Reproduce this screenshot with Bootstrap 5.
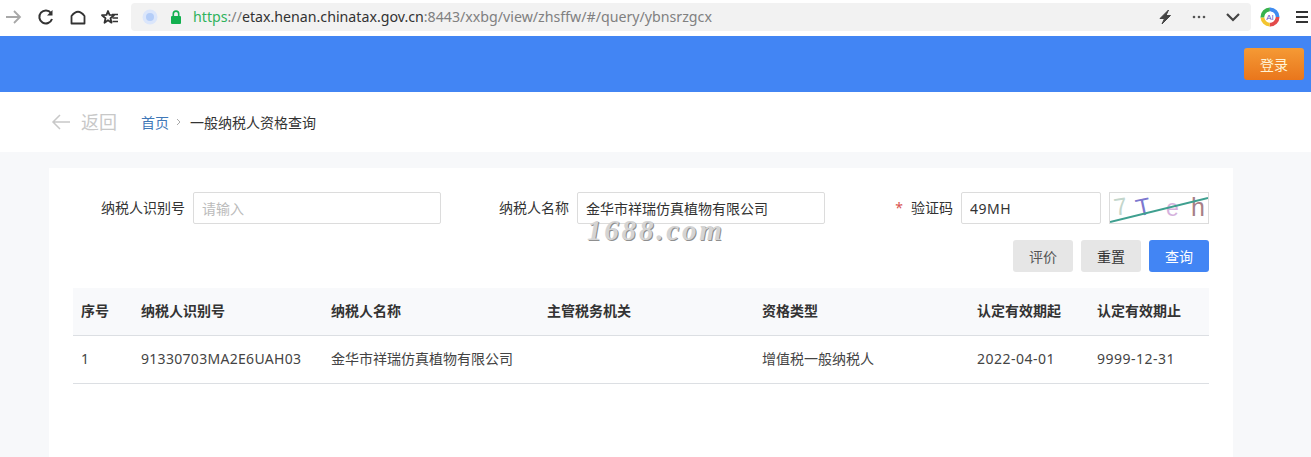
<!DOCTYPE html>
<html lang="zh-CN">
<head>
<meta charset="utf-8">
<title>一般纳税人资格查询</title>
<link rel="stylesheet" href="https://cdn.jsdelivr.net/npm/bootstrap@5.3.0/dist/css/bootstrap.min.css">
<style>
html,body{height:457px;overflow:hidden}
body{background:#f7f8fa;color:#333;font:14px/20px "Noto Sans","Noto Sans CJK SC",sans-serif}
.chrome-bar{height:36px;background:#fff;padding-bottom:2px}
.nav-ico{width:20px;height:20px;flex:none}
.nav-slots{width:131px;padding-left:4px;gap:12px}
.addr{width:1120px;height:28px;background:#f2f2f2;border-radius:4px;padding:0 10px 0 10px}
.lock-ico{margin-left:10px}
.addr-text{font-size:14.2px;color:#808080;white-space:nowrap;margin-left:10px}
.scheme{color:#2fb35d}
.host{color:#333}
.addr-tools{gap:18px}
.ext-tools{flex:1;padding:0 2px 0 9px}
.top-head{height:56px;background:#4285f4;padding-right:7px}
.login-btn{width:60px;height:32px;padding:0;border:0;border-radius:3px;font-size:14px;color:#fff3d6;background:linear-gradient(#f59a35,#e9761c)}
.login-btn:hover{color:#fff3d6;background:#e9761c}
.crumb-bar{height:60px;background:#fff;padding-left:51px}
.back-link{font-size:18px;color:#c8c8c8;width:90px}
.back-link svg{margin-right:11px}
.crumb-home{color:#3f78b8;text-decoration:none}
.crumb-sep{margin:0 9px 0 7px}
.crumb-line{padding-top:1px}
.panel{position:relative;margin:16px 78px 0 49px;background:#fff;padding:24px;height:300px}
.filter-grid{display:grid;grid-template-columns:repeat(3,368px);column-gap:16px}
.filter-label{width:120px;padding-right:8px;text-align:right;flex:none;margin:0}
.req{color:#d9534f;margin-right:8px}
.filter-input{height:32px;border:1px solid #dcdcdc;border-radius:2px;padding:0 8px;font-size:14px;color:#333;box-shadow:none;background:#fff}
.filter-input::placeholder{color:#bbb}
.code-input{width:140px;flex:none;letter-spacing:.5px}
.captcha{width:100px;height:32px;margin-left:8px;flex:none;border:1px solid #dcdcdc;display:block}
.act-row{gap:8px;margin-top:16px}
.act-btn{width:60px;height:32px;padding:0;border:0;border-radius:3px;font-size:14px;background:#e6e6e6;color:#333}
.act-btn.soft{color:#555}
.act-btn.go{background:#4285f4;color:#fff}
.result-table{table-layout:fixed;width:1136px;margin:16px 0 0;color:#333;border-color:#dcdfe3}
.result-table th{height:47px;background:#f8f9fb;font-weight:700;vertical-align:middle;padding:0 8px;border-bottom:1px solid #dcdfe3}
.result-table td{height:48px;vertical-align:middle;padding:0 8px;border-bottom:1px solid #dcdfe3;color:#444}
.result-table td.num{letter-spacing:.3px}
.result-table td.day{letter-spacing:.5px}
.result-table>thead{border-bottom:0}
.c-a{width:60px}.c-b{width:190px}.c-c{width:216px}.c-d{width:215px}.c-e{width:215px}.c-f{width:120px}.c-g{width:120px}
.stamp{position:absolute;left:538px;top:46px;font:italic 700 29px/32px "Liberation Serif",serif;letter-spacing:2.8px;color:#d4d4d4;text-shadow:1px 1px 0 #8f8f8f;pointer-events:none}
</style>
</head>
<body>
<div class="chrome-bar d-flex align-items-center">
  <div class="nav-slots d-flex align-items-center">
    <svg class="nav-ico" viewBox="0 0 20 20" fill="none" stroke="#a8a8a8" stroke-width="1.800"><path d="M2 10h14M10 4l6 6-6 6"/></svg>
    <svg class="nav-ico" viewBox="0 0 20 20" fill="none" stroke="#333" stroke-width="2"><path d="M15 6A6.500 6.500 0 1 0 16 12"/><path d="M16.500 3v5.500h-5.500z" fill="#333" stroke="none"/></svg>
    <svg class="nav-ico" viewBox="0 0 20 20" fill="none" stroke="#333" stroke-width="1.800" stroke-linejoin="round"><path d="M3.500 16.500V9Q10 .5 16.500 9v7.500z"/></svg>
    <svg class="nav-ico" viewBox="0 0 20 20" fill="none" stroke="#333" stroke-width="1.600"><path d="M8 4l1.500 3.800L14 8.200l-3.500 3 1 4.500L8 13.300 4.500 15.700l1-4.500L2 8.200l4.500-.4z" stroke-linejoin="round" stroke-width="1.800"/><path d="M12 7.500h6M12.500 11h5.500M12.500 14.500h5.500" stroke-width="1.500"/></svg>
  </div>
  <div class="addr d-flex align-items-center">
    <svg width="18" height="18" viewBox="0 0 18 18"><circle cx="9" cy="9" r="7.500" fill="#dbe6fb"/><circle cx="9" cy="9" r="4" fill="#b4cdf8"/></svg>
    <svg class="lock-ico" width="14" height="16" viewBox="0 0 14 16"><rect x="2" y="7" width="10" height="8" rx="1" fill="#12b04f"/><path d="M4.300 7V4.800a2.700 2.700 0 0 1 5.400 0V7" fill="none" stroke="#12b04f" stroke-width="1.600"/></svg>
    <span class="addr-text"><span class="scheme">https</span>://<span class="host">etax.henan.chinatax.gov.cn</span>:8443/xxbg/view/zhsffw/#/query/ybnsrzgcx</span>
    <div class="addr-tools ms-auto d-flex align-items-center">
      <svg width="16" height="18" viewBox="0 0 16 18"><path d="M11.500 2L3 10.500h4.500L5 16l8.500-8.500H9z" fill="#444" stroke="#444" stroke-width="1" stroke-linejoin="round"/></svg>
      <svg width="16" height="18" viewBox="0 0 16 18" fill="#555"><circle cx="3" cy="9" r="1.300"/><circle cx="8" cy="9" r="1.300"/><circle cx="13" cy="9" r="1.300"/></svg>
      <svg width="16" height="18" viewBox="0 0 16 18" fill="none" stroke="#444" stroke-width="2.200"><path d="M2 6l6 6 6-6"/></svg>
    </div>
  </div>
  <div class="ext-tools d-flex align-items-center justify-content-between">
    <svg width="20" height="20" viewBox="0 0 20 20" fill="none" stroke-width="4"><circle cx="10" cy="10" r="7.500" stroke="#e34b4b" stroke-dasharray="12 36"/><circle cx="10" cy="10" r="7.500" stroke="#f3c52f" stroke-dasharray="11 37" stroke-dashoffset="-12"/><circle cx="10" cy="10" r="7.500" stroke="#37b24d" stroke-dasharray="12 36" stroke-dashoffset="-23"/><circle cx="10" cy="10" r="7.500" stroke="#3f8cf0" stroke-dasharray="12 36" stroke-dashoffset="-35"/><circle cx="10" cy="10" r="5.500" fill="#fff" stroke="none"/><text x="10" y="13" text-anchor="middle" font-size="8" font-family="Liberation Sans" fill="#5a55c8" stroke="none">AI</text></svg>
    <svg width="14" height="14" viewBox="0 0 14 14" stroke="#333" stroke-width="2"><path d="M1 2h12M1 7h12M1 12h12"/></svg>
  </div>
</div>

<header class="top-head d-flex align-items-center justify-content-end">
  <button type="button" class="btn login-btn">登录</button>
</header>

<nav class="crumb-bar d-flex align-items-center" aria-label="breadcrumb">
  <span class="back-link d-flex align-items-center">
    <svg width="19" height="16" viewBox="0 0 19 16" fill="none" stroke="#c8c8c8" stroke-width="1.500"><path d="M19 8H2M9 1L2 8l7 7"/></svg>返回
  </span>
  <a class="crumb-home crumb-line" href="#">首页</a>
  <svg class="crumb-sep" width="5" height="8" viewBox="0 0 5 8" fill="none" stroke="#aaa"><path d="M1 1l3 3-3 3"/></svg>
  <span class="crumb-line">一般纳税人资格查询</span>
</nav>

<main class="panel">
  <form class="filter-grid">
    <div class="d-flex align-items-center">
      <label class="filter-label" for="f1">纳税人识别号</label>
      <input id="f1" class="form-control filter-input" placeholder="请输入">
    </div>
    <div class="d-flex align-items-center">
      <label class="filter-label" for="f2">纳税人名称</label>
      <input id="f2" class="form-control filter-input" value="金华市祥瑞仿真植物有限公司">
    </div>
    <div class="d-flex align-items-center">
      <label class="filter-label" for="f3"><span class="req">*</span>验证码</label>
      <input id="f3" class="form-control filter-input code-input" value="49MH">
      <svg class="captcha" viewBox="0 0 98 30" font-family="Liberation Sans">
        <text x="4" y="22" font-size="24" fill="#c3d6cc" transform="rotate(-9 10 14)">7</text>
        <text x="26" y="22" font-size="24" fill="#7d78cf" transform="rotate(-12 34 14)">T</text>
        <text x="56" y="23" font-size="23" fill="#d5b2dd">e</text>
        <text x="81" y="23" font-size="25" fill="#a77f88">h</text>
        <path d="M0 29L98 5" stroke="#3e9f8f" stroke-width="2"/>
      </svg>
    </div>
  </form>
  <div class="act-row d-flex justify-content-end">
    <button type="button" class="btn act-btn soft">评价</button>
    <button type="button" class="btn act-btn">重置</button>
    <button type="button" class="btn act-btn go">查询</button>
  </div>
  <table class="table result-table">
    <thead>
      <tr>
        <th class="c-a">序号</th><th class="c-b">纳税人识别号</th><th class="c-c">纳税人名称</th><th class="c-d">主管税务机关</th><th class="c-e">资格类型</th><th class="c-f">认定有效期起</th><th class="c-g">认定有效期止</th>
      </tr>
    </thead>
    <tbody>
      <tr>
        <td>1</td><td class="num">91330703MA2E6UAH03</td><td>金华市祥瑞仿真植物有限公司</td><td></td><td>增值税一般纳税人</td><td class="day">2022-04-01</td><td class="day">9999-12-31</td>
      </tr>
    </tbody>
  </table>
  <div class="stamp">1688.com</div>
</main>
<script src="https://cdn.jsdelivr.net/npm/bootstrap@5.3.0/dist/js/bootstrap.bundle.min.js"></script>
</body>
</html>
